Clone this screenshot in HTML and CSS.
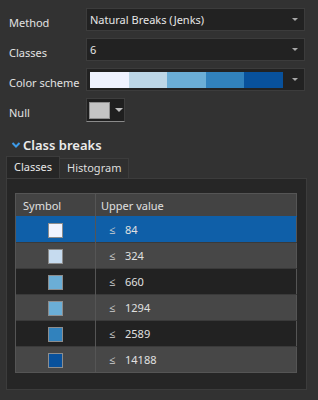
FILE: index.html
```html
<!DOCTYPE html>
<html lang="en">
  <head>
    <meta charset="UTF-8" />
    <title>Symbology</title>
    <link rel="stylesheet" href="styles.css">
  </head>
  <body>
    <div class="form">
      <label class="label">Method</label>
      <div class="select"><span>Natural Breaks (Jenks)</span><i class="caret"></i></div>

      <label class="label">Classes</label>
      <div class="select"><span>6</span><i class="caret"></i></div>

      <label class="label">Color scheme</label>
      <div class="select ramp-select">
        <div class="ramp">
          <b style="background:#eff3ff"></b>
          <b style="background:#bdd7e7"></b>
          <b style="background:#6baed6"></b>
          <b style="background:#3182bd"></b>
          <b style="background:#08519c"></b>
        </div>
        <i class="caret"></i>
      </div>

      <label class="label">Null</label>
      <div class="null-picker">
        <div class="null-swatch"></div>
        <i class="caret big"></i>
      </div>
    </div>

    <div class="section">
      <svg class="chevron" width="10" height="8" viewBox="0 0 10 8">
        <path d="M1.5 2 L5 5.5 L8.5 2" fill="none" stroke="#3d9be9" stroke-width="2"/>
      </svg>
      <span>Class breaks</span>
    </div>

    <div class="tabs">
      <div class="tab active">Classes</div>
      <div class="tab">Histogram</div>
    </div>

    <div class="panel">
      <table class="breaks">
        <thead>
          <tr><th class="sym">Symbol</th><th>Upper value</th></tr>
        </thead>
        <tbody>
          <tr class="selected"><td class="sym"><span class="swatch" style="background:#eff3ff"></span></td><td><span class="le">≤</span>84</td></tr>
          <tr class="odd"><td class="sym"><span class="swatch" style="background:#c6dbef"></span></td><td><span class="le">≤</span>324</td></tr>
          <tr><td class="sym"><span class="swatch" style="background:#6baed6"></span></td><td><span class="le">≤</span>660</td></tr>
          <tr class="odd"><td class="sym"><span class="swatch" style="background:#6baed6"></span></td><td><span class="le">≤</span>1294</td></tr>
          <tr><td class="sym"><span class="swatch" style="background:#3182bd"></span></td><td><span class="le">≤</span>2589</td></tr>
          <tr class="odd"><td class="sym"><span class="swatch" style="background:#08519c"></span></td><td><span class="le">≤</span>14188</td></tr>
        </tbody>
      </table>
    </div>
  </body>
</html>
```

FILE: styles.css
```css
body {
  margin: 0;
  background-color: #323232;
  color: #e2e2e2;
  font-family: "Noto Sans", "Open Sans", sans-serif;
  font-size: 11px;
  width: 318px;
  height: 400px;
  overflow: hidden;
}
.form {
  display: grid;
  grid-template-columns: 86px 219px;
  grid-auto-rows: 23px;
  row-gap: 7px;
  padding-top: 8px;
}
.label {
  display: block;
  padding-left: 9px;
  padding-top: 7px;
  line-height: 16px;
  white-space: nowrap;
}
.select {
  display: flex;
  align-items: center;
  box-sizing: border-box;
  background-color: #222222;
  border: 1px solid #3c3c3c;
  padding: 0 6px 0 3px;
  color: #e6e6e6;
}
.select span {
  flex: 1;
}
.caret {
  display: block;
  width: 0;
  height: 0;
  border-left: 3px solid transparent;
  border-right: 3px solid transparent;
  border-top: 3px solid #a8a8a8;
}
.caret.big {
  border-left-width: 4px;
  border-right-width: 4px;
  border-top-width: 4px;
  border-top-color: #bdbdbd;
}
.ramp-select {
  padding-left: 3px;
}
.ramp {
  flex: 1;
  display: flex;
  height: 16px;
  margin-right: 9px;
}
.ramp b {
  flex: 1;
}
.null-picker {
  display: flex;
  align-items: center;
  box-sizing: border-box;
  width: 39px;
  height: 24px;
  background-color: #1f1f1f;
  border: 1px solid #3e3e3e;
  border-bottom: 1px solid #8a8a8a;
  padding-left: 2px;
}
.null-swatch {
  width: 21px;
  height: 17px;
  background-color: #c4c4c4;
  border: 1px solid #8f8f8f;
  box-sizing: border-box;
  margin-right: 5px;
}
.section {
  display: flex;
  align-items: center;
  margin-top: 13px;
  padding-left: 11px;
  font-size: 13px;
  font-weight: 600;
  color: #ececec;
  height: 22px;
}
.chevron {
  margin-right: 2px;
}
.tabs {
  display: flex;
  align-items: flex-end;
  margin-left: 6px;
  height: 22px;
}
.tab {
  box-sizing: border-box;
  height: 20px;
  padding: 0 7px 0 7px;
  line-height: 18px;
  background-color: #2f2f2f;
  border: 1px solid #3c3c3c;
  border-bottom: none;
  border-left: none;
  color: #dedede;
  font-size: 11px;
}
.tab.active {
  height: 22px;
  padding: 0 7px;
  line-height: 20px;
  background-color: #262626;
  border-left: 1px solid #3c3c3c;
  color: #e8e8e8;
}
.panel {
  box-sizing: border-box;
  width: 301px;
  height: 212px;
  margin-left: 6px;
  background-color: #262626;
  border: 1px solid #3c3c3c;
  padding: 14px 9px 0 8px;
}
.breaks {
  width: 282px;
  border-collapse: collapse;
  border: 1px solid #555555;
  font-size: 11px;
}
.breaks th {
  height: 22px;
  background-color: #434343;
  text-align: left;
  font-weight: normal;
  padding: 0 5px;
  color: #e0e0e0;
  border-left: 1px solid #555555;
}
.breaks td {
  height: 25px;
  padding: 0 0 0 13px;
  color: #e0e0e0;
  border-left: 1px solid #555555;
  border-top: 1px solid #3a3a3a;
  background-color: #222222;
}
.breaks tr.odd td {
  background-color: #474747;
}
.breaks tr.selected td {
  background-color: #0f5fa8;
  border-top-color: #0f5fa8;
}
.breaks th.sym {
  width: 67px;
  padding-left: 7px;
}
.breaks td.sym {
  text-align: center;
  padding: 0;
}
.swatch {
  display: inline-block;
  vertical-align: middle;
  width: 15px;
  height: 15px;
  box-sizing: border-box;
  border: 1px solid #8d8d8d;
}
.le {
  display: inline-block;
  width: 16px;
  color: #cfcfcf;
}
```
